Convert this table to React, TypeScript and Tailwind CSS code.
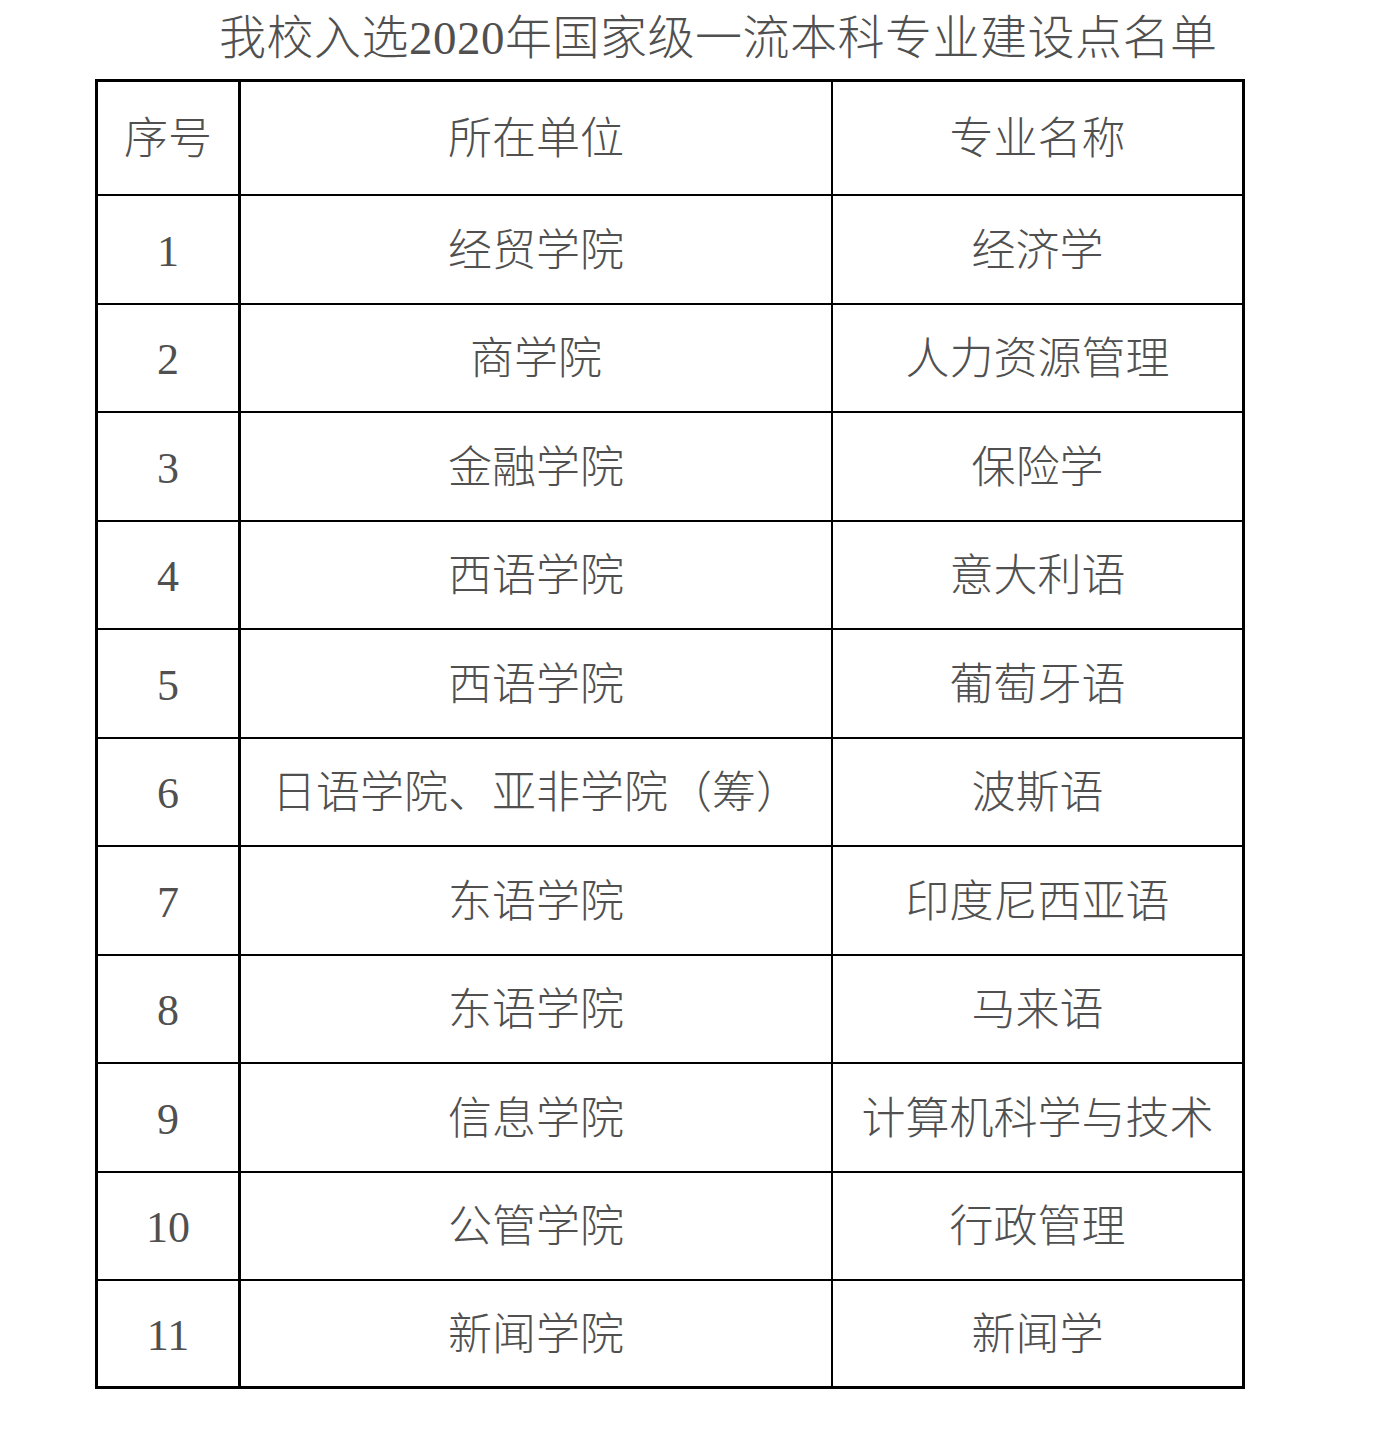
const rows: [string, string, string][] = [
  ["1", "经贸学院", "经济学"],
  ["2", "商学院", "人力资源管理"],
  ["3", "金融学院", "保险学"],
  ["4", "西语学院", "意大利语"],
  ["5", "西语学院", "葡萄牙语"],
  ["6", "日语学院、亚非学院（筹）", "波斯语"],
  ["7", "东语学院", "印度尼西亚语"],
  ["8", "东语学院", "马来语"],
  ["9", "信息学院", "计算机科学与技术"],
  ["10", "公管学院", "行政管理"],
  ["11", "新闻学院", "新闻学"],
];

const font = {
  fontFamily: '"Liberation Serif", "Noto Sans CJK SC", serif',
};

export default function App() {
  return (
    <div className="min-h-[1441px] w-[1378px] bg-white text-[#505050]" style={font}>
      <h1 className="pl-[219px] pt-[13px] text-[47px] font-light leading-[50px] tracking-[0.5px]">
        我校入选2020年国家级一流本科专业建设点名单
      </h1>
      <div className="ml-[95px] mt-[16px] w-[1150px] border-[3px] border-black text-[44px] font-light">
        <div className="flex h-[114px] border-b-2 border-black">
          <div className="flex w-[143px] items-center justify-center border-r-[3px] border-black pt-[4px]">序号</div>
          <div className="flex w-[592px] items-center justify-center border-r-2 border-black pt-[4px]">所在单位</div>
          <div className="flex flex-1 items-center justify-center pt-[4px]">专业名称</div>
        </div>
        {rows.map(([no, unit, major], i) => (
          <div
            key={no}
            className={`flex border-black ${i < rows.length - 1 ? "h-[108.5px] border-b-2" : "h-[105px]"}`}
          >
            <div className="flex w-[143px] items-center justify-center border-r-[3px] border-black pt-[5px]">{no}</div>
            <div className="flex w-[592px] items-center justify-center border-r-2 border-black pt-[5px]">{unit}</div>
            <div className="flex flex-1 items-center justify-center pt-[5px]">{major}</div>
          </div>
        ))}
      </div>
    </div>
  );
}
